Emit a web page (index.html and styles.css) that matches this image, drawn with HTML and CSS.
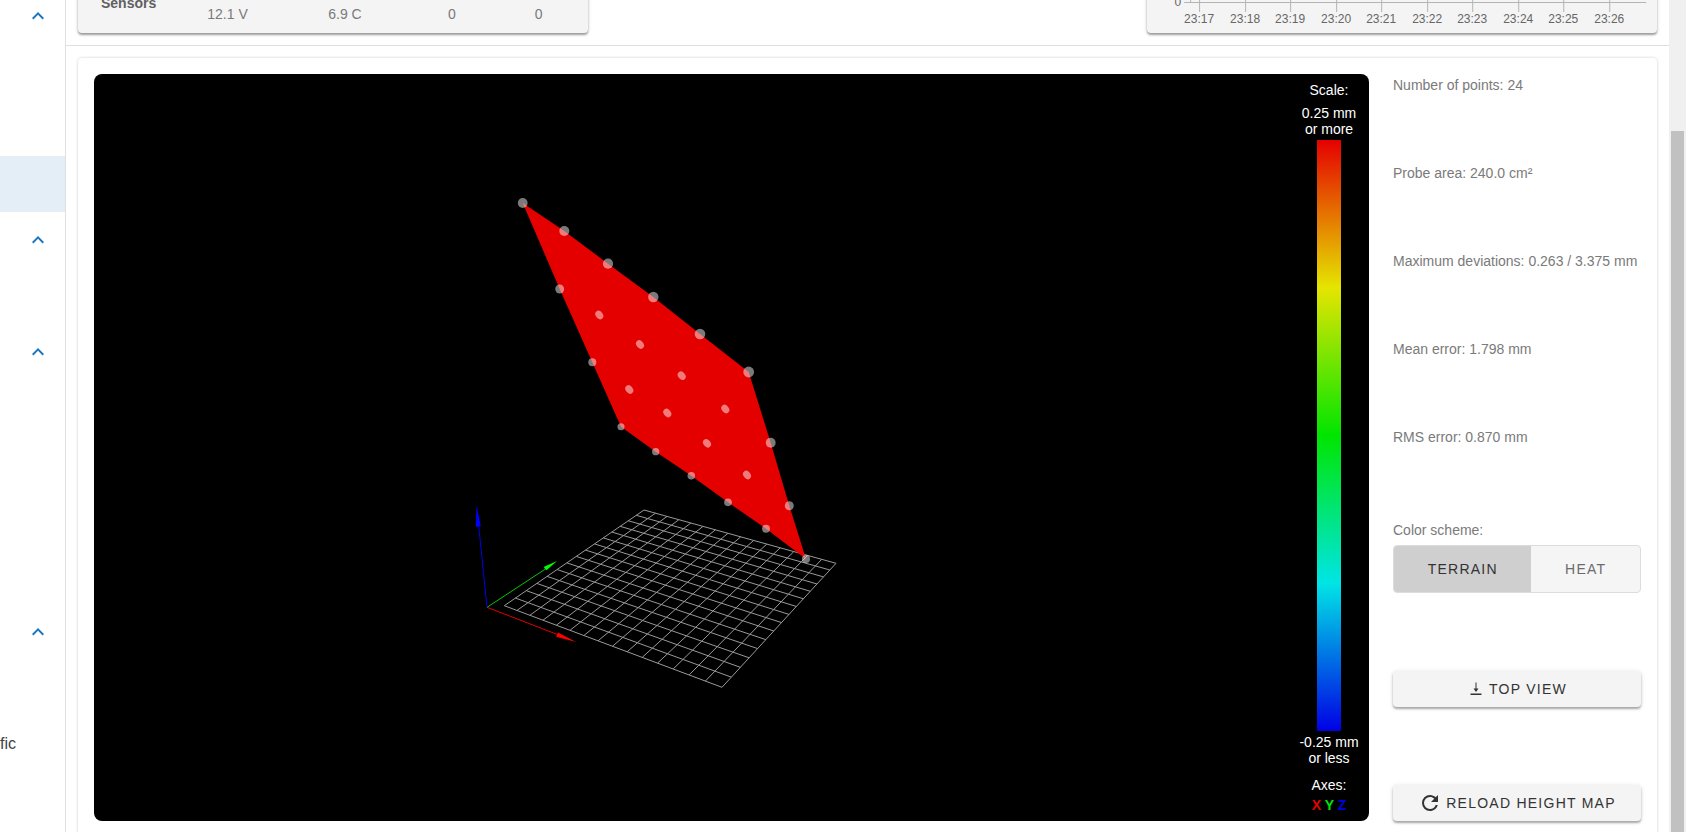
FILE: index.html
```html
<!DOCTYPE html>
<html lang="en">
<head>
<meta charset="utf-8">
<title>Height Map</title>
<link rel="stylesheet" href="styles.css">
</head>
<body>
<div class="app">
  <nav class="sidebar" aria-label="Navigation">
    <button class="nav-item" aria-label="Control"><svg class="chevron" viewBox="0 0 24 24"><path d="M7.4 15.4 12 10.8l4.6 4.6L18 14l-6-6-6 6z"/></svg></button>
    <a class="nav-item" href="#" aria-label="Dashboard"></a>
    <a class="nav-item" href="#" aria-label="Console"></a>
    <a class="nav-item active" href="#" aria-label="Height Map"></a>
    <button class="nav-item" aria-label="Machine"><svg class="chevron" viewBox="0 0 24 24"><path d="M7.4 15.4 12 10.8l4.6 4.6L18 14l-6-6-6 6z"/></svg></button>
    <a class="nav-item" href="#" aria-label="Status"></a>
    <button class="nav-item" aria-label="Files"><svg class="chevron" viewBox="0 0 24 24"><path d="M7.4 15.4 12 10.8l4.6 4.6L18 14l-6-6-6 6z"/></svg></button>
    <a class="nav-item" href="#" aria-label="Jobs"></a>
    <a class="nav-item" href="#" aria-label="Macros"></a>
    <a class="nav-item" href="#" aria-label="Filaments"></a>
    <a class="nav-item" href="#" aria-label="System"></a>
    <button class="nav-item" aria-label="Settings"><svg class="chevron" viewBox="0 0 24 24"><path d="M7.4 15.4 12 10.8l4.6 4.6L18 14l-6-6-6 6z"/></svg></button>
    <a class="nav-item" href="#" aria-label="General"></a>
    <a class="nav-item" href="#">fic</a>
  </nav>

  <main class="main">
    <section class="status">
      <div class="card status-card">
        <table class="sensors">
          <colgroup><col class="c-name"><col class="c-vin"><col class="c-temp"><col class="c-fan"><col></colgroup>
          <tr><th scope="row">Sensors</th><td>12.1 V</td><td>6.9 C</td><td>0</td><td>0</td></tr>
        </table>
      </div>
      <div class="card status-card chart-card">
        <svg class="chart" viewBox="0 0 510 40" role="img" aria-label="Temperature chart" id="chart">
          <text x="34" y="14" text-anchor="end">0</text>
          <path d="M37 10.500H499M43.500 0V11"/>
        </svg>
      </div>
    </section>

    <section class="page">
      <div class="card map-card">
        <div class="viewer">
          <svg class="scene" viewBox="94 74 1195 747" preserveAspectRatio="xMidYMid meet" role="img" aria-label="Height map">
            <g id="grid" class="grid"></g>
            <g stroke-width="1">
              <path stroke="#e00000" d="M487 607.300 560 635.500"/>
              <path fill="#f00" d="M576 642 556.200 636.800 558 632.400z"/>
              <path stroke="#00c800" d="M487 607.300 547 568"/>
              <path fill="#0f0" d="M557 561 546.500 570.300 543.600 567z"/>
              <path stroke="#0000e8" d="M487 607.300 478.500 524"/>
              <path fill="#00f" d="M476.500 505 480.800 526 475.900 527z"/>
            </g>
            <path id="surface" fill="#e50000"/>
            <g id="points" fill="#fff" fill-opacity=".48"></g>
          </svg>
          <div class="legend">
            <div class="legend-title">Scale:</div>
            <div class="legend-value">0.25 mm<br>or more</div>
            <div class="legend-bar"></div>
            <div class="legend-value">-0.25 mm<br>or less</div>
            <div class="legend-axes">Axes:</div>
            <div class="axes"><span class="x">X</span> <span class="y">Y</span> <span class="z">Z</span></div>
          </div>
        </div>
        <aside class="side">
          <div>Number of points: 24</div>
          <div>Probe area: 240.0 cm²</div>
          <div>Maximum deviations: 0.263 / 3.375 mm</div>
          <div>Mean error: 1.798 mm</div>
          <div>RMS error: 0.870 mm</div>
          <div class="scheme">
            <div id="scheme-label">Color scheme:</div>
            <div class="toggle" role="group" aria-labelledby="scheme-label">
              <button class="selected" aria-pressed="true">TERRAIN</button>
              <button aria-pressed="false">HEAT</button>
            </div>
          </div>
          <button class="btn"><svg class="icon-top" viewBox="0 0 18 18"><path d="M9 2.500V11" fill="none" stroke="currentColor"/><path d="M6.500 8.500H11.500L9 12zM3.500 13.500H14.500V15H3.500z" fill="currentColor"/></svg>TOP VIEW</button>
          <button class="btn reload"><svg class="icon-reload" viewBox="0 0 24 24"><path fill="currentColor" d="M17.650 6.350C16.200 4.900 14.210 4 12 4a8 8 0 0 0-8 8 8 8 0 0 0 8 8c3.730 0 6.840-2.550 7.730-6h-2.080A5.990 5.990 0 0 1 12 18a6 6 0 0 1-6-6 6 6 0 0 1 6-6c1.660 0 3.140.69 4.220 1.780L13 11h7V4z"/></svg>RELOAD HEIGHT MAP</button>
        </aside>
      </div>
    </section>
  </main>
  <div class="scrollbar"><div class="thumb"></div></div>
</div>
<script src="scene.js"></script>
</body>
</html>
```
FILE: styles.css
```css
* { box-sizing: border-box; }
body { margin: 0; font: 14px/22px "Liberation Sans", Arial, sans-serif; color: #7a7a7a; background: #fff; }
button { font: inherit; border: 0; cursor: pointer; }
.app { display: flex; height: 100vh; overflow: hidden; }

.sidebar { flex: none; width: 66px; margin-top: -12px; border-right: 1px solid #e0e0e0; }
.nav-item { display: flex; align-items: center; width: 100%; height: 56px; padding: 0; background: none; color: #424242; font-size: 16px; text-decoration: none; }
.nav-item.active { background: #e3eef7; }
.chevron { width: 24px; height: 24px; margin-left: 26px; fill: #1976bf; }

.main { flex: 1; min-width: 0; }
.card { border-radius: 4px; box-shadow: 0 0 3px rgba(0,0,0,.2), 0 1px 1px rgba(0,0,0,.08); }
.status { display: grid; grid-template-columns: repeat(3, 1fr); gap: 24px; margin-top: -8px; padding: 0 12px 12px; border-bottom: 1px solid #e0e0e0; }
.status-card { height: 41px; background: #f4f4f4; box-shadow: 0 2px 2px rgba(0,0,0,.32), 0 1px 4px rgba(0,0,0,.14); }
.chart-card { grid-column: 3; }
.sensors { width: 100%; padding-right: 12px; border-spacing: 0; table-layout: fixed; }
.sensors th { padding: 0 0 0 23px; text-align: left; vertical-align: top; color: #616161; }
.sensors td { padding: 11px 0 0; text-align: center; }
.c-name { width: 90px; }
.c-vin { width: 119px; }
.c-temp { width: 116px; }
.c-fan { width: 98px; }
.chart { display: block; width: 100%; font-size: 12px; fill: #666; }
.chart path { stroke: #b4b4b4; fill: none; }

.page { padding: 12px; }
.map-card { display: flex; gap: 24px; padding: 16px; }
.viewer { flex: 1; min-width: 0; display: flex; background: #000; border-radius: 8px; }
.scene { flex: 1; min-width: 0; width: 100%; }
.grid { stroke: #999; stroke-width: 1; }
.legend { flex: none; width: 80px; display: flex; flex-direction: column; padding: 8px 0; text-align: center; color: #fff; line-height: 16px; }
.legend-title { padding-bottom: 7px; }
.legend-value { padding: 0 0 3px; }
.legend-bar { flex: 1; width: 24px; margin: 0 auto 3px; background: linear-gradient(#e50000, #e5e500 25%, #00e500 50%, #00e5e5 75%, #0000e5); }
.legend-axes { padding: 8px 0 4px; }
.axes { font-weight: bold; }
.x { color: #e50000; }
.y { color: #00e500; }
.z { color: #0000e5; }

.side { flex: none; width: 248px; display: flex; flex-direction: column; gap: 66px; }
.scheme { margin-bottom: 12px; padding-top: 5px; }
.toggle { display: flex; height: 48px; margin-top: 4px; border: 1px solid #dcdcdc; border-radius: 4px; overflow: hidden; background: #f5f5f5; }
.toggle button { flex: auto; padding: 0 12px; background: none; color: #6c6c6c; letter-spacing: 1.25px; }
.toggle .selected { background: #cfcfcf; color: #333; }
.btn { display: flex; align-items: center; justify-content: center; height: 36px; background: #f4f4f4; color: #333; border-radius: 4px; letter-spacing: 1.25px; box-shadow: 0 2px 2px rgba(0,0,0,.28), 0 1px 5px rgba(0,0,0,.14); }
.reload { margin-top: 12px; }
.icon-top { width: 18px; height: 18px; margin-right: 4px; }
.icon-reload { width: 24px; height: 24px; margin-right: 4px; }

.scrollbar { flex: none; width: 17px; padding: 131px 2px 0; background: #f0f0f0; }
.thumb { height: 100%; background: #c1c1c1; }
```
FILE: scene.js
```js
const NS = "http://www.w3.org/2000/svg";

function add(parent, name, attrs, text) {
  const el = document.createElementNS(NS, name);
  for (const key in attrs) el.setAttribute(key, attrs[key]);
  if (text) el.textContent = text;
  parent.appendChild(el);
}

// Projective mapping of the unit square onto the bed outline
const [x0, y0, x1, y1, x2, y2, x3, y3] = [504.3, 605.7, 722, 687.3, 836, 563.3, 644, 510];
const dx1 = x1 - x2, dx2 = x3 - x2, dx3 = x0 - x1 + x2 - x3;
const dy1 = y1 - y2, dy2 = y3 - y2, dy3 = y0 - y1 + y2 - y3;
const det = dx1 * dy2 - dx2 * dy1;
const g = (dx3 * dy2 - dx2 * dy3) / det;
const h = (dx1 * dy3 - dx3 * dy1) / det;

function project(u, v) {
  const w = g * u + h * v + 1;
  return [
    ((x1 - x0 + g * x1) * u + (x3 - x0 + h * x3) * v + x0) / w,
    ((y1 - y0 + g * y1) * u + (y3 - y0 + h * y3) * v + y0) / w
  ];
}

const grid = document.getElementById("grid");
const cells = 15;
for (let i = 0; i <= cells; i++) {
  const t = i / cells;
  add(grid, "path", { d: "M" + project(t, 0) + "L" + project(t, 1) + "M" + project(0, t) + "L" + project(1, t) });
}

// Probe points, back row to front row
const rows = [
  [[522.7, 203], [564.3, 231], [608, 263.7], [653.3, 297], [700, 334], [748.7, 372]],
  [[559.7, 289], [599.3, 315], [640, 344.5], [681.7, 375.7], [725.3, 409], [770.7, 442.7]],
  [[592.3, 362.3], [629.3, 389.5], [667.3, 413], [707, 443.3], [747, 475], [789.3, 505.7]],
  [[621, 426.7], [655.7, 451.7], [691.3, 475.7], [728, 502.3], [766, 528.7], [806, 559]]
];
const outline = [...rows[0], rows[1][5], rows[2][5], ...[...rows[3]].reverse(), rows[2][0], rows[1][0]];
document.getElementById("surface").setAttribute("d", "M" + outline.join("L") + "Z");

const points = document.getElementById("points");
rows.forEach((row, r) => row.forEach(([x, y], c) => {
  const inner = r > 0 && r < 3 && c > 0 && c < 5;
  if (inner) {
    add(points, "ellipse", { cx: x, cy: y, rx: 4.6, ry: 3.5, transform: `rotate(50 ${x} ${y})` });
  } else {
    add(points, "circle", { cx: x, cy: y, r: 4.9 - r * 0.45 + c * 0.1 });
  }
}));

// Time axis of the temperature chart
const chart = document.getElementById("chart");
for (let i = 0; i < 10; i++) {
  const x = Math.round(52 + i * 45.5);
  add(chart, "path", { d: `M${x + 0.5} 0V20` });
  add(chart, "text", { x: x, y: 31, "text-anchor": "middle" }, "23:" + (17 + i));
}
```
